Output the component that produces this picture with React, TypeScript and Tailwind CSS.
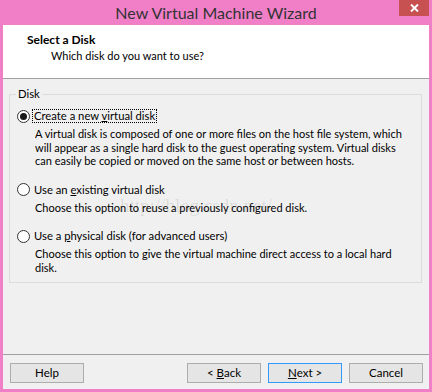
import React from "react";

const font = { fontFamily: 'Lato, "Noto Sans", sans-serif' };

function Radio({ checked }: { checked?: boolean }) {
  return (
    <span className="relative flex h-[13px] w-[13px] shrink-0 items-center justify-center rounded-full border border-[#333333] bg-white">
      {checked && <span className="h-[7px] w-[7px] rounded-full bg-[#1a1a1a]" />}
    </span>
  );
}

function Btn({ children, primary }: { children: React.ReactNode; primary?: boolean }) {
  return (
    <div
      className={
        "flex h-[20px] w-[74px] items-center justify-center border bg-[#e5e5e5] text-[11.5px] leading-none text-black " +
        (primary ? "border-[#3399ff]" : "border-[#adadad]")
      }
    >
      {children}
    </div>
  );
}

export default function App() {
  return (
    <div className="flex h-[392px] w-[432px] flex-col bg-[#f07fc8]" style={font}>
      <div className="relative flex h-[25px] shrink-0 items-center justify-center">
        <span className="text-[16px] leading-none text-[#333333]">New Virtual Machine Wizard</span>
        <div className="absolute right-[3px] top-0 flex h-[16px] w-[30px] items-center justify-center bg-[#c75050]">
          <svg width="9" height="8" viewBox="0 0 9 8">
            <path d="M1 0.5 L8 7.5 M8 0.5 L1 7.5" stroke="white" strokeWidth="2" />
          </svg>
        </div>
      </div>
      <div className="mx-[3px] mb-[3px] flex flex-1 flex-col bg-[#f0f0f0] text-[11.25px] text-black">
        <div className="h-[54px] shrink-0 border-b border-[#a0a0a0] bg-white pl-[24px] pt-[7px]">
          <div className="text-[12px] font-bold leading-[16px]">Select a Disk</div>
          <div className="pl-[24px] text-[11px] leading-[16px]">Which disk do you want to use?</div>
        </div>
        <div className="relative flex-1 pl-[6px] pr-[7px] pt-[15px]">
          <div className="relative h-[189px] border border-[#dcdcdc]">
            <span className="absolute left-[6px] top-[-8px] bg-[#f0f0f0] px-[2px] leading-[14px]">Disk</span>
            <div className="flex flex-col pl-[7px] pt-[14px]">
              <div className="flex h-[14px] items-center">
                <Radio checked />
                <span className="ml-[2px] border border-dotted border-black px-[1px] leading-[12px]">
                  Create a new <span className="underline">v</span>irtual disk
                </span>
              </div>
              <div className="mt-[4px] whitespace-nowrap pl-[18px] text-[11px] leading-[13.5px]">
                A virtual disk is composed of one or more files on the host file system, which
                <br />
                will appear as a single hard disk to the guest operating system. Virtual disks
                <br />
                can easily be copied or moved on the same host or between hosts.
              </div>
              <div className="mt-[15px] flex h-[14px] items-center">
                <Radio />
                <span className="ml-[4px] leading-[12px]">
                  Use an <span className="underline">e</span>xisting virtual disk
                </span>
              </div>
              <div className="mt-[4px] pl-[18px] text-[11px] leading-[13.5px]">
                Choose this option to reuse a previously configured disk.
              </div>
              <div className="mt-[15px] flex h-[14px] items-center">
                <Radio />
                <span className="ml-[4px] leading-[12px]">
                  Use a <span className="underline">p</span>hysical disk (for advanced users)
                </span>
              </div>
              <div className="mt-[4px] whitespace-nowrap pl-[18px] text-[11px] leading-[13.5px]">
                Choose this option to give the virtual machine direct access to a local hard
                <br />
                disk.
              </div>
            </div>
          </div>
          <div
            className="pointer-events-none absolute left-[117px] top-[117px] text-[19px] leading-none text-[#000000]/10"
            style={{ fontFamily: '"Liberation Serif", serif' }}
          >
            http://blog.csdn.net/
          </div>
        </div>
        <div className="flex h-[35px] shrink-0 items-start border-t border-[#a0a0a0] pl-[7px] pr-[6px] pt-[8px]">
          <Btn>Help</Btn>
          <div className="flex-1" />
          <div className="flex gap-[7px]">
            <Btn>
              &lt; <span className="ml-[3px] underline">B</span>ack
            </Btn>
            <Btn primary>
              <span className="underline">N</span>ext &gt;
            </Btn>
            <Btn>Cancel</Btn>
          </div>
        </div>
      </div>
    </div>
  );
}
